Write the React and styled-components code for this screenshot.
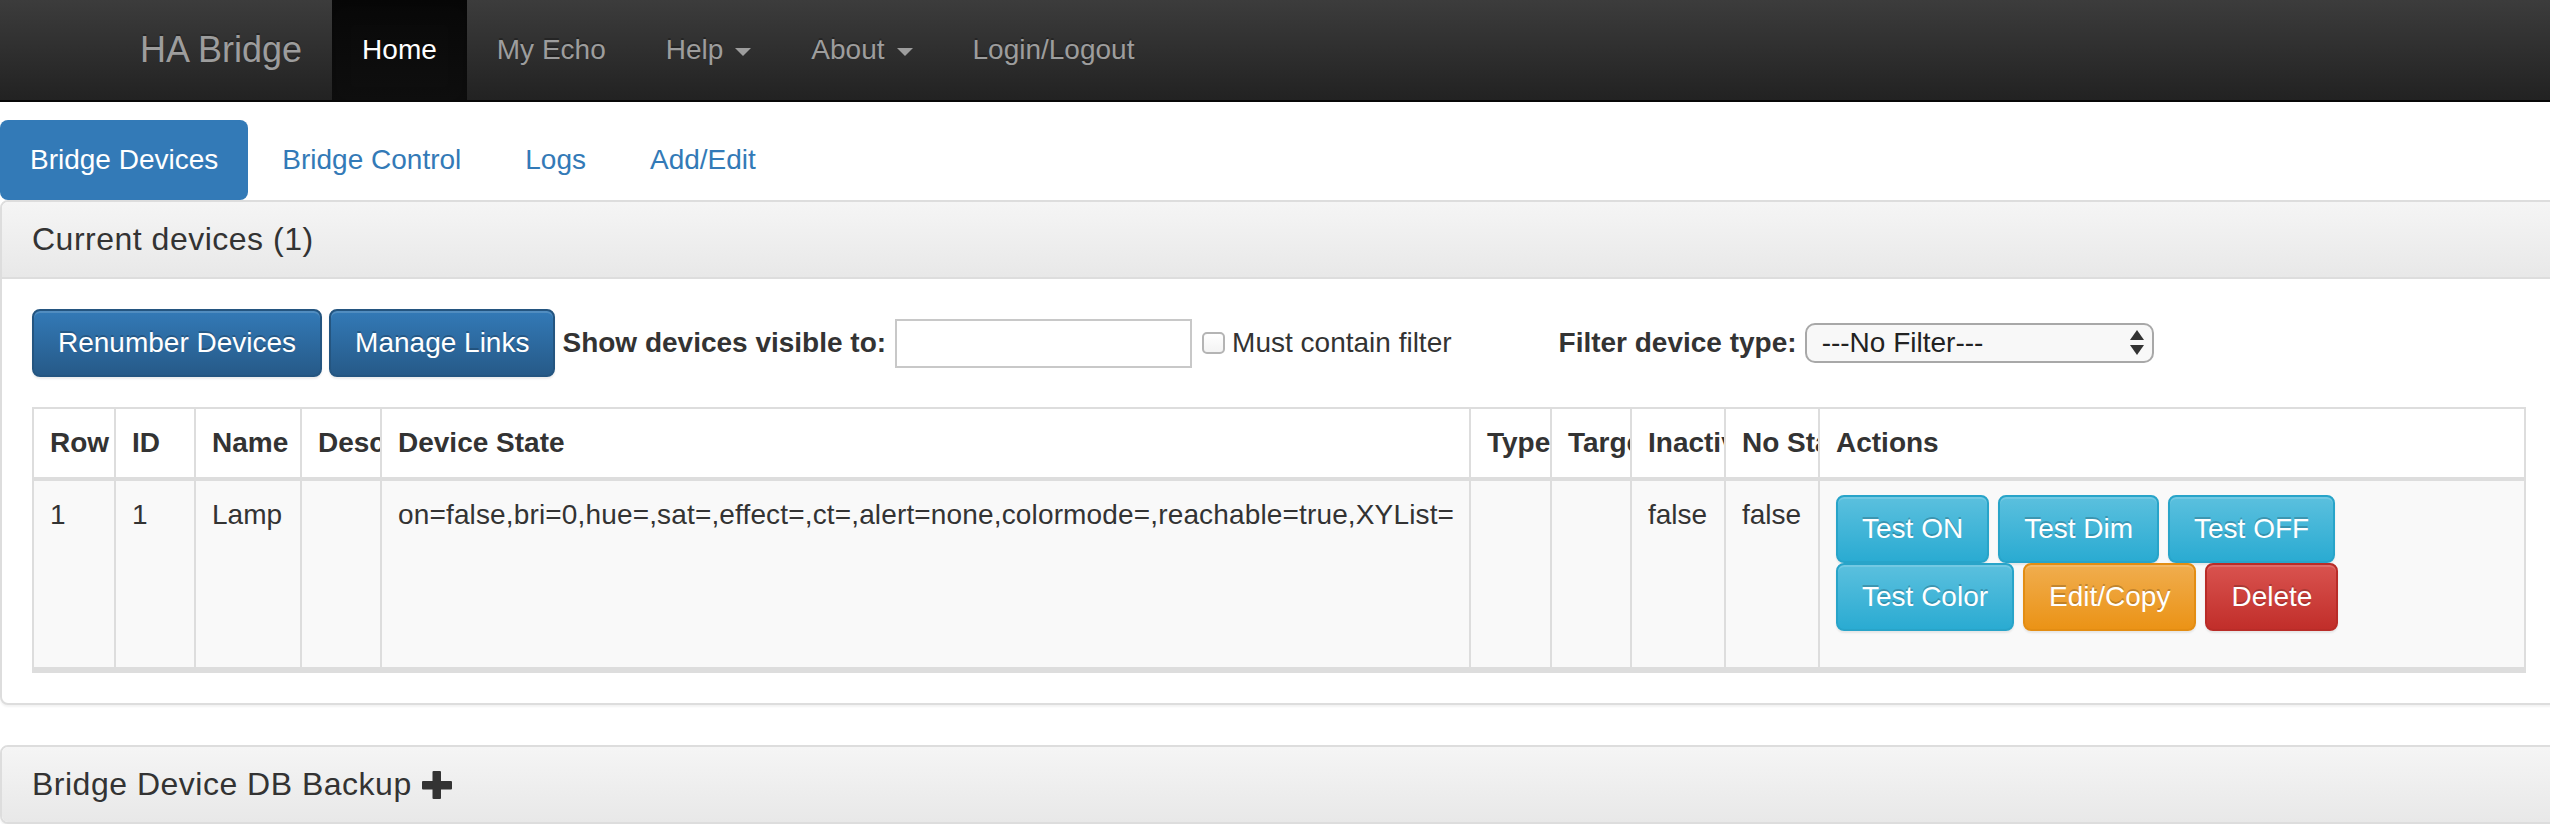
import React from 'react'
import styled, { createGlobalStyle, css } from 'styled-components'

const GlobalStyle = createGlobalStyle`
  * { box-sizing: border-box; }
  html, body {
    margin: 0;
    padding: 0;
    background: #fff;
    overflow: hidden;
  }
  body {
    font-family: "Liberation Sans", Arial, Helvetica, sans-serif;
    font-size: 28px;
    line-height: 40px;
    color: #333;
  }
`

const navItems = [
  { label: 'Home', active: true },
  { label: 'My Echo' },
  { label: 'Help', caret: true },
  { label: 'About', caret: true },
  { label: 'Login/Logout' },
]

const tabs = ['Bridge Devices', 'Bridge Control', 'Logs', 'Add/Edit']

const columns = [
  { title: 'Row', w: 80 },
  { title: 'ID', w: 80 },
  { title: 'Name', w: 106 },
  { title: 'Description', w: 80 },
  { title: 'Device State', w: 1089 },
  { title: 'Type', w: 81 },
  { title: 'Target', w: 80 },
  { title: 'Inactive', w: 94 },
  { title: 'No State', w: 94 },
  { title: 'Actions', w: 706 },
]

const device = {
  row: '1',
  id: '1',
  name: 'Lamp',
  description: '',
  state: 'on=false,bri=0,hue=,sat=,effect=,ct=,alert=none,colormode=,reachable=true,XYList=',
  type: '',
  target: '',
  inactive: 'false',
  noState: 'false',
}

const Page = styled.div`
  width: 2560px;
`

/* ---------- top navbar ---------- */
const Navbar = styled.nav`
  display: flex;
  height: 102px;
  padding-left: 110px;
  background: linear-gradient(to bottom, #3c3c3c 0%, #222 100%);
  border-bottom: 2px solid #080808;
`

const Brand = styled.a`
  display: block;
  padding: 30px;
  font-size: 36px;
  line-height: 40px;
  color: #9d9d9d;
  text-shadow: 0 -2px 0 rgba(0, 0, 0, 0.25);
  text-decoration: none;
`

const NavLink = styled.a`
  display: block;
  padding: 30px 30px;
  font-size: 28px;
  line-height: 40px;
  color: #9d9d9d;
  text-decoration: none;
  text-shadow: 0 -2px 0 rgba(0, 0, 0, 0.25);
  white-space: nowrap;
  ${p => p.$active && css`
    color: #fff;
    background: linear-gradient(to bottom, #080808 0%, #0f0f0f 100%);
    box-shadow: inset 0 6px 18px rgba(0, 0, 0, 0.25);
  `}
`

const Caret = styled.span`
  display: inline-block;
  width: 0;
  height: 0;
  margin-left: 12px;
  vertical-align: middle;
  border-top: 8px solid;
  border-left: 8px solid transparent;
  border-right: 8px solid transparent;
`

/* ---------- pills ---------- */
const Pills = styled.ul`
  display: flex;
  list-style: none;
  margin: 18px 0 0;
  padding: 0;
`

const Pill = styled.li`
  margin-left: ${p => (p.$first ? 0 : 4)}px;
`

const PillLink = styled.a`
  display: block;
  padding: 20px 30px;
  border-radius: 8px;
  color: #337ab7;
  text-decoration: none;
  ${p => p.$active && css`
    color: #fff;
    background: #337ab7;
  `}
`

/* ---------- panels ---------- */
const Panel = styled.section`
  width: 2558px;
  margin-bottom: ${p => p.$mb || 0}px;
  background: #fff;
  border: 2px solid #ddd;
  border-radius: 8px;
  box-shadow: 0 2px 2px rgba(0, 0, 0, 0.05);
`

const PanelHeading = styled.div`
  padding: 20px 30px;
  background: linear-gradient(to bottom, #f5f5f5 0%, #e8e8e8 100%);
  border-radius: ${p => (p.$collapsed ? '6px' : '6px 6px 0 0')};
  border-bottom: ${p => (p.$collapsed ? 'none' : '2px solid #ddd')};
`

const PanelTitle = styled.h3`
  display: flex;
  align-items: center;
  margin: 0;
  font-size: 32px;
  line-height: 35px;
  font-weight: normal;
  letter-spacing: 0.5px;
  color: #333;
`

const PanelBody = styled.div`
  padding: 30px;
`

/* ---------- toolbar ---------- */
const Toolbar = styled.div`
  display: flex;
  align-items: center;
  height: 68px;
`

const variants = {
  primary: { from: '#337ab7', to: '#265a88', border: '#245580' },
  info: { from: '#5bc0de', to: '#2aabd2', border: '#28a4c9' },
  warning: { from: '#f0ad4e', to: '#eb9316', border: '#e38d13' },
  danger: { from: '#d9534f', to: '#c12e2a', border: '#b92c28' },
}

const Btn = styled.button`
  flex: none;
  height: 68px;
  margin-left: ${p => p.$ml || 0}px;
  padding: 12px 24px;
  font-family: inherit;
  font-size: 28px;
  line-height: 40px;
  color: #fff;
  white-space: nowrap;
  text-shadow: 0 -2px 0 rgba(0, 0, 0, 0.2);
  background: ${p => `linear-gradient(to bottom, ${variants[p.$variant].from} 0%, ${variants[p.$variant].to} 100%)`};
  border: 2px solid ${p => variants[p.$variant].border};
  border-radius: 8px;
  box-shadow: inset 0 2px 0 rgba(255, 255, 255, 0.15), 0 2px 2px rgba(0, 0, 0, 0.075);
  cursor: pointer;
`

const Label = styled.label`
  flex: none;
  margin-left: ${p => p.$ml || 0}px;
  font-weight: ${p => (p.$bold ? 'bold' : 'normal')};
  white-space: nowrap;
`

const TextInput = styled.input`
  flex: none;
  width: 297px;
  height: 49px;
  margin-left: 9px;
  padding: 4px 8px;
  font-family: inherit;
  font-size: 26px;
  border: 2px solid #c8c8c8;
  background: #fff;
`

const Check = styled.input`
  flex: none;
  appearance: none;
  width: 23px;
  height: 22px;
  margin: 0 0 0 10px;
  border: 2px solid #b4b4b4;
  border-radius: 5px;
  background: linear-gradient(to bottom, #fff 0%, #f3f3f3 100%);
`

const SelectWrap = styled.div`
  position: relative;
  flex: none;
  margin-left: 8px;
`

const Select = styled.select`
  appearance: none;
  width: 349px;
  height: 40px;
  padding: 0 40px 0 15px;
  font-family: inherit;
  font-size: 28px;
  color: #222;
  background: #f8f8f8;
  border: 2px solid #a8a8a8;
  border-radius: 10px;
`

const SelectArrows = styled.svg`
  position: absolute;
  right: 10px;
  top: 7px;
  pointer-events: none;
`

/* ---------- table ---------- */
const Table = styled.table`
  width: 2494px;
  margin-top: 30px;
  table-layout: fixed;
  border-collapse: separate;
  border-spacing: 0;
  border: 2px solid #ddd;
  border-bottom-width: 6px;
`

const Col = styled.col`
  width: ${p => p.$w}px;
`

const cellBase = css`
  overflow: hidden;
  white-space: nowrap;
  text-align: left;
  border-left: 2px solid #ddd;
  &:first-child {
    border-left: none;
  }
`

const Th = styled.th`
  ${cellBase}
  padding: 14px 16px;
  font-weight: bold;
  vertical-align: bottom;
  background: #fff;
  border-bottom: 4px solid #ddd;
`

const Td = styled.td`
  ${cellBase}
  padding: 14px 16px ${p => (p.$actions ? 36 : 14)}px;
  vertical-align: top;
  background: #f9f9f9;
  letter-spacing: ${p => (p.$wide ? '0.15px' : 'normal')};
`

const ButtonRow = styled.div`
  display: flex;
  gap: 9px;
`

const PlusIcon = () => (
  <svg width="30" height="28" viewBox="0 0 30 28" style={{ marginLeft: 10 }}>
    <rect x="0" y="10" width="30" height="8.5" rx="1" fill="#333" />
    <rect x="10.5" y="0" width="8.5" height="28" rx="1" fill="#333" />
  </svg>
)

export default function App() {
  const cells = [
    device.row,
    device.id,
    device.name,
    device.description,
    device.state,
    device.type,
    device.target,
    device.inactive,
    device.noState,
  ]

  return (
    <Page>
      <GlobalStyle />
      <Navbar>
        <Brand>HA Bridge</Brand>
        {navItems.map(item => (
          <NavLink key={item.label} $active={item.active}>
            {item.label}
            {item.caret && <Caret />}
          </NavLink>
        ))}
      </Navbar>

      <Pills>
        {tabs.map((t, i) => (
          <Pill key={t} $first={i === 0}>
            <PillLink $active={i === 0}>{t}</PillLink>
          </Pill>
        ))}
      </Pills>

      <Panel $mb={40}>
        <PanelHeading>
          <PanelTitle>Current devices (1)</PanelTitle>
        </PanelHeading>
        <PanelBody>
          <Toolbar>
            <Btn $variant="primary">Renumber Devices</Btn>
            <Btn $variant="primary" $ml={7}>Manage Links</Btn>
            <Label $bold $ml={7}>Show devices visible to:</Label>
            <TextInput type="text" />
            <Check type="checkbox" />
            <Label $ml={7}>Must contain filter</Label>
            <Label $bold $ml={107}>Filter device type:</Label>
            <SelectWrap>
              <Select defaultValue="">
                <option value="">---No Filter---</option>
              </Select>
              <SelectArrows width="14" height="26" viewBox="0 0 14 26">
                <polygon points="7,0 14,10 0,10" fill="#333" />
                <polygon points="0,15 14,15 7,25" fill="#333" />
              </SelectArrows>
            </SelectWrap>
          </Toolbar>

          <Table>
            <colgroup>
              {columns.map(c => (
                <Col key={c.title} $w={c.w} />
              ))}
            </colgroup>
            <thead>
              <tr>
                {columns.map(c => (
                  <Th key={c.title}>{c.title}</Th>
                ))}
              </tr>
            </thead>
            <tbody>
              <tr>
                {cells.map((v, i) => (
                  <Td key={i} $wide={i === 4}>{v}</Td>
                ))}
                <Td $actions>
                  <ButtonRow>
                    <Btn $variant="info">Test ON</Btn>
                    <Btn $variant="info">Test Dim</Btn>
                    <Btn $variant="info">Test OFF</Btn>
                  </ButtonRow>
                  <ButtonRow>
                    <Btn $variant="info">Test Color</Btn>
                    <Btn $variant="warning">Edit/Copy</Btn>
                    <Btn $variant="danger">Delete</Btn>
                  </ButtonRow>
                </Td>
              </tr>
            </tbody>
          </Table>
        </PanelBody>
      </Panel>

      <Panel>
        <PanelHeading $collapsed>
          <PanelTitle>
            Bridge Device DB Backup
            <PlusIcon />
          </PanelTitle>
        </PanelHeading>
      </Panel>
    </Page>
  )
}
